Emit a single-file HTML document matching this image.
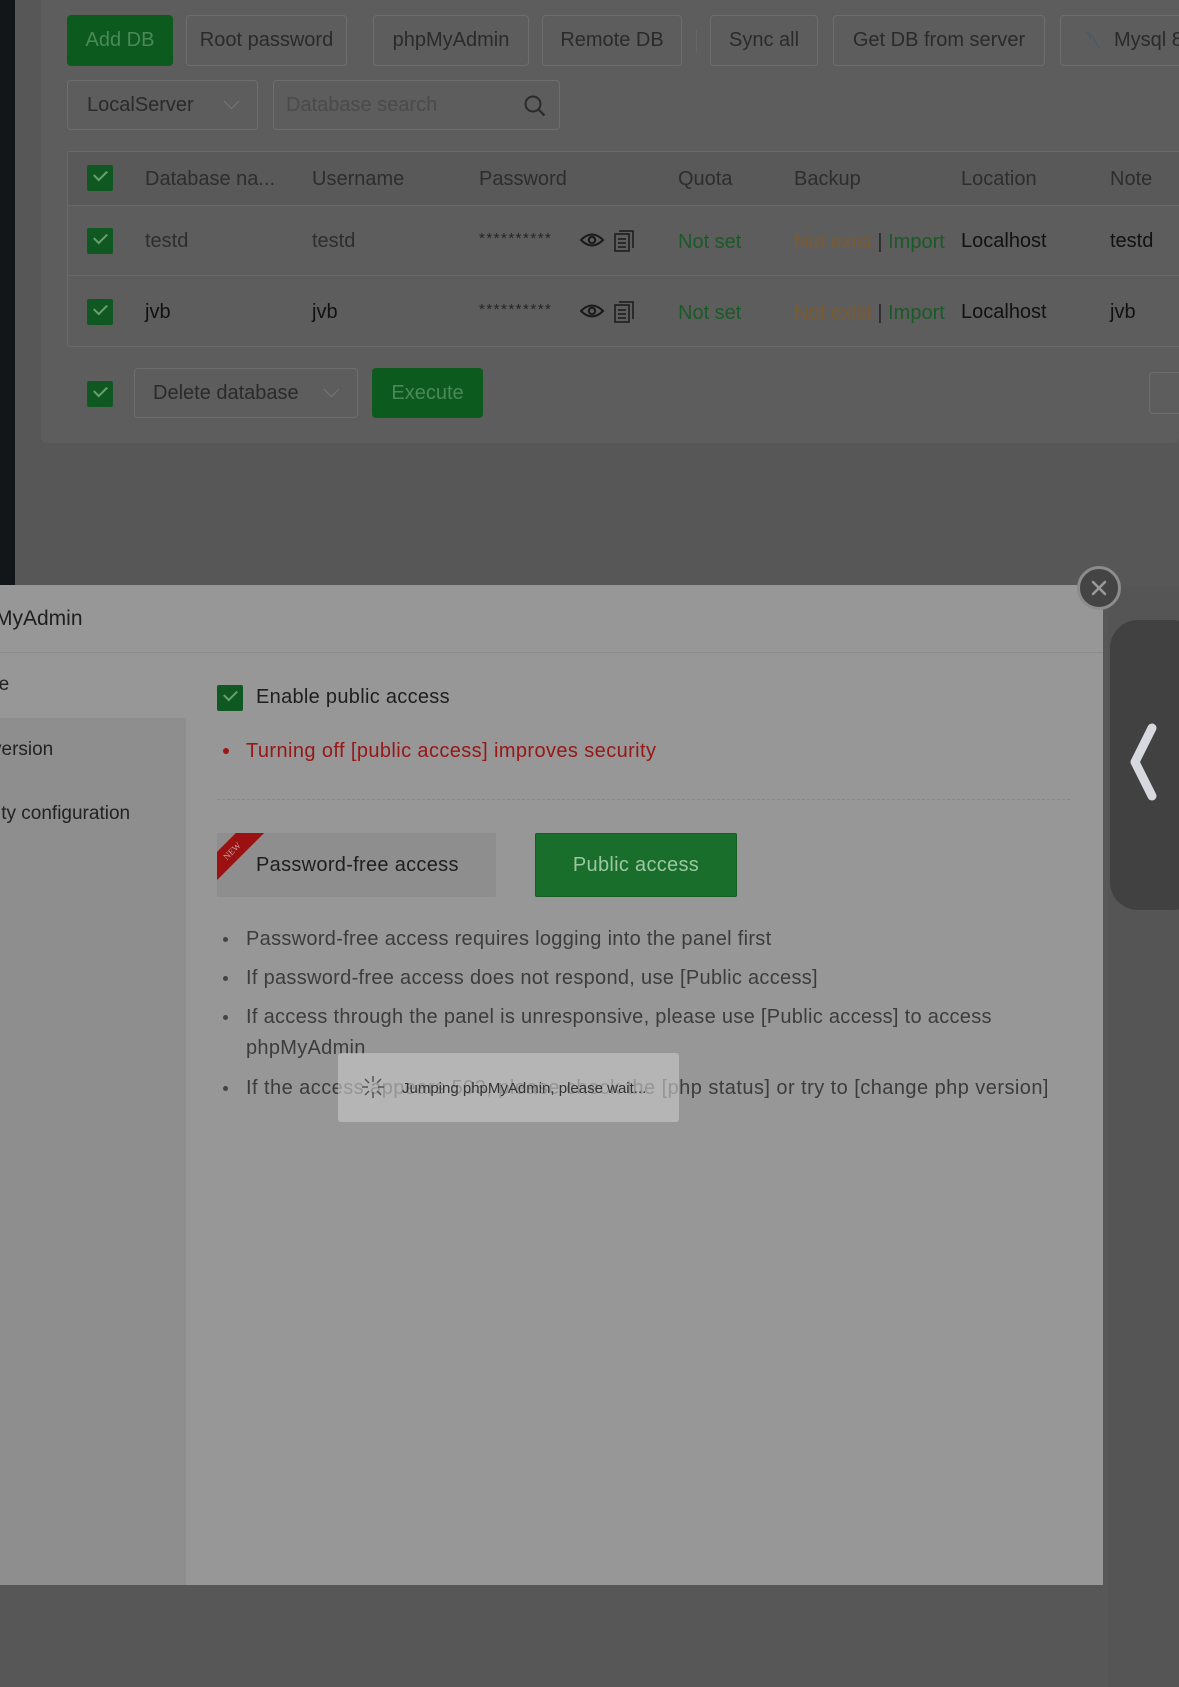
<!DOCTYPE html>
<html><head><meta charset="utf-8"><style>
*{box-sizing:border-box;margin:0;padding:0}
body{width:1179px;height:1687px;background:#575757;position:relative;overflow:hidden;font-family:"Liberation Sans",sans-serif;color:#262626}
.a{position:absolute;white-space:nowrap}
.btn{position:absolute;border:1px solid #6e6e6e;border-radius:4px;background:#5d5d5d;color:#2a2a2a;font-size:20px;display:flex;align-items:center;justify-content:center;height:51px;top:15px}
.g{background:#0c5a1d;border-color:#0c5a1d;color:#4a8a55}
.cb{position:absolute;width:26px;height:26px;background:#0f5821;border-radius:2px}
.cb:after{content:"";position:absolute;left:7px;top:5px;width:11px;height:6px;border-left:2px solid #6aa070;border-bottom:2px solid #6aa070;transform:rotate(-45deg)}
.t{font-size:20px}
.gr{color:#1a5a26}.or{color:#7a5a30}
.m{font-size:20px;letter-spacing:.3px}
</style></head><body>
<div class="a" style="left:0;top:0;width:15px;height:585px;background:#121619"></div>
<div class="a" style="left:41px;top:0;width:1138px;height:443px;background:#5d5d5d;border-radius:0 0 6px 6px"></div>

<div class="btn g" style="left:67px;width:106px">Add DB</div>
<div class="btn" style="left:186px;width:161px">Root password</div>
<div class="btn" style="left:373px;width:156px">phpMyAdmin</div>
<div class="btn" style="left:542px;width:140px">Remote DB</div>
<div class="a" style="left:696px;top:30px;width:1px;height:22px;background:#666"></div>
<div class="btn" style="left:710px;width:108px">Sync all</div>
<div class="btn" style="left:833px;width:212px">Get DB from server</div>
<div class="btn" style="left:1060px;width:200px;justify-content:flex-start;padding-left:53px">Mysql 8
<svg style="position:absolute;left:22px;top:14px" width="20" height="22" viewBox="0 0 20 22"><path d="M3 2q6 2 9 9l5 8M6 3l1 6" fill="none" stroke="#4a5a6a" stroke-width="1.5"/></svg></div>

<div class="btn" style="left:67px;top:80px;width:191px;height:50px;justify-content:flex-start;padding-left:19px">LocalServer<span style="position:absolute;right:20px;top:15px;width:11px;height:11px;border-right:1px solid #777;border-bottom:1px solid #777;transform:rotate(45deg)"></span></div>
<div class="btn" style="left:273px;top:80px;width:287px;height:50px;justify-content:flex-start;padding-left:12px;color:#4a4a4a">Database search
<svg style="position:absolute;right:12px;top:13px" width="24" height="24" viewBox="0 0 24 24"><circle cx="10" cy="10" r="7.5" fill="none" stroke="#2a2a2a" stroke-width="2"/><path d="M15.5 15.5l6 6" stroke="#2a2a2a" stroke-width="2.2"/></svg></div>

<div class="a" style="left:67px;top:151px;width:1130px;height:196px;border:1px solid #6a6a6a;border-radius:3px"></div>
<div class="a" style="left:68px;top:152px;width:1120px;height:53px;background:#595959"></div>
<div class="a" style="left:68px;top:205px;width:1120px;height:1px;background:#686868"></div>
<div class="a" style="left:68px;top:275px;width:1120px;height:1px;background:#686868"></div>
<div class="cb" style="left:87px;top:165px"></div>
<div class="cb" style="left:87px;top:228px"></div>
<div class="cb" style="left:87px;top:299px"></div>
<div class="a t" style="left:145px;top:168px;color:#2d2d2d">Database na...</div>
<div class="a t" style="left:312px;top:168px;color:#2d2d2d">Username</div>
<div class="a t" style="left:479px;top:168px;color:#2d2d2d">Password</div>
<div class="a t" style="left:678px;top:168px;color:#2d2d2d">Quota</div>
<div class="a t" style="left:794px;top:168px;color:#2d2d2d">Backup</div>
<div class="a t" style="left:961px;top:168px;color:#2d2d2d">Location</div>
<div class="a t" style="left:1110px;top:168px;color:#2d2d2d">Note</div>

<div class="a t" style="left:145px;top:230px;color:#2d2d2d">testd</div>
<div class="a t" style="left:312px;top:230px;color:#2d2d2d">testd</div>
<div class="a" style="left:479px;top:230px;font-size:15px;letter-spacing:1.5px">**********</div>
<div class="a t gr" style="left:678px;top:231px">Not set</div>
<div class="a t" style="left:794px;top:231px"><span class="or">Not exist</span> | <span class="gr">Import</span></div>
<div class="a t" style="left:961px;top:230px;color:#111">Localhost</div>
<div class="a t" style="left:1110px;top:230px;color:#111">testd</div>

<div class="a t" style="left:145px;top:301px;color:#111">jvb</div>
<div class="a t" style="left:312px;top:301px;color:#111">jvb</div>
<div class="a" style="left:479px;top:301px;font-size:15px;letter-spacing:1.5px">**********</div>
<div class="a t gr" style="left:678px;top:302px">Not set</div>
<div class="a t" style="left:794px;top:302px"><span class="or">Not exist</span> | <span class="gr">Import</span></div>
<div class="a t" style="left:961px;top:301px;color:#111">Localhost</div>
<div class="a t" style="left:1110px;top:301px;color:#111">jvb</div>

<svg class="a" style="left:580px;top:228px" width="60" height="26" viewBox="0 0 60 26"><path d="M1 12Q12 1 23 12Q12 23 1 12Z" fill="none" stroke="#1a1a1a" stroke-width="2"/><circle cx="12" cy="12" r="3.2" fill="none" stroke="#1a1a1a" stroke-width="2"/><rect x="35" y="6" width="14" height="17" fill="none" stroke="#1a1a1a" stroke-width="1.5"/><path d="M39 3h14v17M38 11h8M38 15h8M38 19h8" fill="none" stroke="#1a1a1a" stroke-width="1.5"/></svg>
<svg class="a" style="left:580px;top:299px" width="60" height="26" viewBox="0 0 60 26"><path d="M1 12Q12 1 23 12Q12 23 1 12Z" fill="none" stroke="#1a1a1a" stroke-width="2"/><circle cx="12" cy="12" r="3.2" fill="none" stroke="#1a1a1a" stroke-width="2"/><rect x="35" y="6" width="14" height="17" fill="none" stroke="#1a1a1a" stroke-width="1.5"/><path d="M39 3h14v17M38 11h8M38 15h8M38 19h8" fill="none" stroke="#1a1a1a" stroke-width="1.5"/></svg>

<div class="cb" style="left:87px;top:381px"></div>
<div class="btn" style="left:134px;top:368px;width:224px;height:50px;justify-content:flex-start;padding-left:18px">Delete database<span style="position:absolute;right:20px;top:15px;width:11px;height:11px;border-right:1px solid #777;border-bottom:1px solid #777;transform:rotate(45deg)"></span></div>
<div class="btn g" style="left:372px;top:368px;width:111px;height:50px">Execute</div>
<div class="btn" style="left:1149px;top:372px;width:60px;height:42px"></div>

<div class="a" style="left:1108px;top:585px;width:71px;height:1102px;background:#555"></div>
<div class="a" style="left:1110px;top:620px;width:90px;height:290px;background:#414141;border-radius:28px"></div>
<svg class="a" style="left:1125px;top:720px" width="40" height="90" viewBox="0 0 40 90"><path d="M27 8L10 42L27 76" fill="none" stroke="#d8d8df" stroke-width="9" stroke-linecap="round" stroke-linejoin="round"/></svg>

<div class="a" style="left:0;top:585px;width:1103px;height:1000px;background:#979797"></div>
<div class="a" style="left:0;top:652px;width:1103px;height:1px;background:#8a8a8a"></div>
<div class="a" style="left:0;top:653px;width:186px;height:932px;background:#8e8e8e"></div>
<div class="a" style="left:0;top:653px;width:186px;height:65px;background:#979797"></div>
<div class="a" style="left:-5px;top:607px;font-size:21px;color:#1e1e1e">MyAdmin</div>
<div class="a" style="left:-12px;top:674px;font-size:19px;color:#222">ge</div>
<div class="a" style="left:-8px;top:739px;font-size:19px;color:#222">version</div>
<div class="a" style="left:-3px;top:803px;font-size:19px;color:#222">ity configuration</div>

<div class="cb" style="left:217px;top:685px"></div>
<div class="a m" style="left:256px;top:686px;color:#1e1e1e">Enable public access</div>
<div class="a" style="left:223px;top:748px;width:6px;height:6px;border-radius:50%;background:#9a1515"></div>
<div class="a m" style="left:246px;top:740px;color:#971616;letter-spacing:.4px">Turning off [public access] improves security</div>
<div class="a" style="left:217px;top:799px;width:853px;border-top:1px dashed #888"></div>

<div class="a" style="left:217px;top:833px;width:279px;height:64px;background:#8e8e8e;border-radius:2px;overflow:hidden">
<div class="a" style="left:-30px;top:8px;width:90px;height:20px;background:#9b1010;transform:rotate(-45deg);color:#c9a0a0;font-size:9px;font-family:'Liberation Serif',serif;text-align:center;line-height:20px">NEW</div>
<div class="a m" style="left:39px;top:21px;color:#1e1e1e;letter-spacing:.3px">Password-free access</div></div>
<div class="a" style="left:535px;top:833px;width:202px;height:64px;background:#1a6e2b;border:1px solid #135f22;border-radius:2px;color:#9cc7a3;font-size:20px;letter-spacing:.3px;display:flex;align-items:center;justify-content:center">Public access</div>

<div class="a" style="left:223px;top:937px;width:5px;height:5px;border-radius:50%;background:#444"></div>
<div class="a m" style="left:246px;top:928px;color:#3c3c3c">Password-free access requires logging into the panel first</div>
<div class="a" style="left:223px;top:976px;width:5px;height:5px;border-radius:50%;background:#444"></div>
<div class="a m" style="left:246px;top:967px;color:#3c3c3c">If password-free access does not respond, use [Public access]</div>
<div class="a" style="left:223px;top:1015px;width:5px;height:5px;border-radius:50%;background:#444"></div>
<div class="a m" style="left:246px;top:1006px;color:#3c3c3c">If access through the panel is unresponsive, please use [Public access] to access</div>
<div class="a m" style="left:246px;top:1037px;color:#3c3c3c">phpMyAdmin</div>
<div class="a" style="left:223px;top:1086px;width:5px;height:5px;border-radius:50%;background:#444"></div>
<div class="a m" style="left:246px;top:1077px;color:#3c3c3c;letter-spacing:.45px">If the access appears 503, please check the [php status] or try to [change php version]</div>

<div class="a" style="left:338px;top:1053px;width:341px;height:69px;background:rgba(196,196,196,0.65);border-radius:3px"></div>
<svg class="a" style="left:360px;top:1074px" width="26" height="26" viewBox="0 0 26 26" stroke="#555" stroke-width="1.5"><path d="M13 2v6M13 18v6M2 13h6M18 13h6M5 5l4 4M17 17l4 4M21 5l-4 4M9 17l-4 4"/></svg>
<div class="a" style="left:402px;top:1080px;font-size:15px;color:#333">Jumping phpMyAdmin, please wait...</div>

<div class="a" style="left:1077px;top:566px;width:44px;height:44px;border-radius:50%;background:#444;border:3px solid #8c8c8c"></div>
<svg class="a" style="left:1089px;top:578px" width="20" height="20" viewBox="0 0 20 20"><path d="M4 4l12 12M16 4L4 16" stroke="#9a9a9a" stroke-width="2.5" stroke-linecap="round"/></svg>
</body></html>
